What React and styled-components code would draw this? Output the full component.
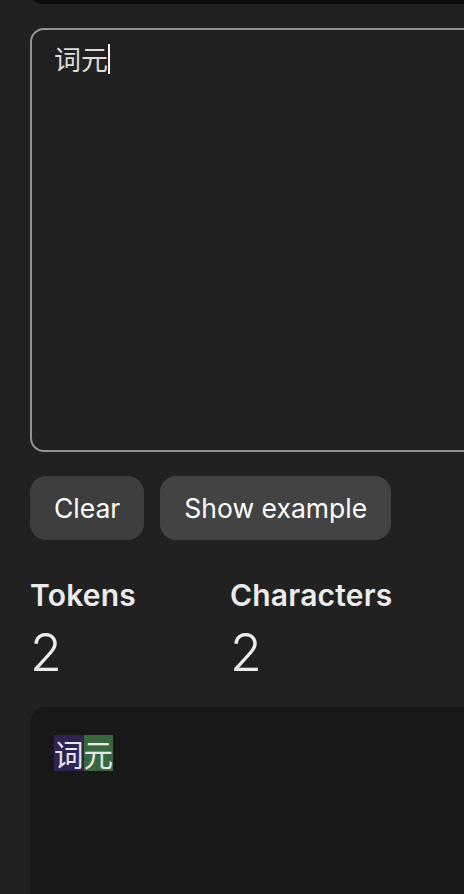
import React from "react";
import styled, { createGlobalStyle } from "styled-components";

const Global = createGlobalStyle`
  html, body {
    margin: 0;
    padding: 0;
    background: #212121;
    overflow: hidden;
  }
  body {
    font-family: Inter, "Noto Sans", "Noto Sans CJK SC", sans-serif;
    color: #ececec;
  }
`;

const Page = styled.main`
  width: 820px;
  padding: 0 0 0 30px;
  display: flex;
  flex-direction: column;
`;

const TopPanel = styled.div`
  height: 40px;
  margin-top: -36px;
  background: #0d0d0d;
  border-radius: 12px;
`;

const Editor = styled.div`
  margin-top: 24px;
  box-sizing: border-box;
  height: 424px;
  border: 2px solid #939393;
  border-radius: 14px;
  padding: 14px 22px 12px;
  font-family: "Noto Sans CJK SC", sans-serif;
  font-size: 27px;
  line-height: 30px;
  color: #dcdcdc;
`;

const Caret = styled.span`
  display: inline-block;
  width: 1.5px;
  height: 30px;
  background: #f2f2f2;
  vertical-align: top;
`;

const ButtonRow = styled.div`
  margin-top: 24px;
  display: flex;
  gap: 16px;
`;

const Button = styled.button`
  height: 64px;
  padding: 0 24px;
  border: none;
  border-radius: 16px;
  background: ${(p) => (p.$light ? "#434343" : "#3e3e3e")};
  color: #ffffff;
  font-family: Inter, sans-serif;
  font-size: 26.5px;
  font-weight: 400;
  cursor: pointer;
`;

const Stats = styled.div`
  margin-top: 37px;
  display: grid;
  grid-template-columns: 200px 200px;
`;

const Stat = styled.div`
  display: flex;
  flex-direction: column;
  gap: 10px;
`;

const StatLabel = styled.div`
  font-size: 30px;
  line-height: 36px;
  font-weight: 600;
  letter-spacing: 0.2px;
  color: #ececec;
`;

const StatValue = styled.div`
  font-size: 52px;
  line-height: 60px;
  font-weight: 300;
  color: #ececec;
`;

const Output = styled.div`
  margin-top: 24px;
  height: 420px;
  background: #181818;
  border-radius: 16px;
  padding: 28px 24px;
  box-sizing: border-box;
`;

const Token = styled.span`
  display: inline-block;
  font-family: "Noto Sans CJK SC", sans-serif;
  font-size: 29.5px;
  line-height: 36px;
  color: #e6e6e6;
  background: ${(p) => p.$color};
`;

const tokenColors = ["rgba(107, 64, 216, 0.3)", "rgba(104, 222, 122, 0.4)"];
const tokens = ["词", "元"];

export default function App() {
  return (
    <>
      <Global />
      <Page>
        <TopPanel />
        <Editor>
          词元
          <Caret />
        </Editor>
        <ButtonRow>
          <Button>Clear</Button>
          <Button $light>Show example</Button>
        </ButtonRow>
        <Stats>
          <Stat>
            <StatLabel>Tokens</StatLabel>
            <StatValue>2</StatValue>
          </Stat>
          <Stat>
            <StatLabel>Characters</StatLabel>
            <StatValue>2</StatValue>
          </Stat>
        </Stats>
        <Output>
          {tokens.map((t, i) => (
            <Token key={i} $color={tokenColors[i % tokenColors.length]}>
              {t}
            </Token>
          ))}
        </Output>
      </Page>
    </>
  );
}
